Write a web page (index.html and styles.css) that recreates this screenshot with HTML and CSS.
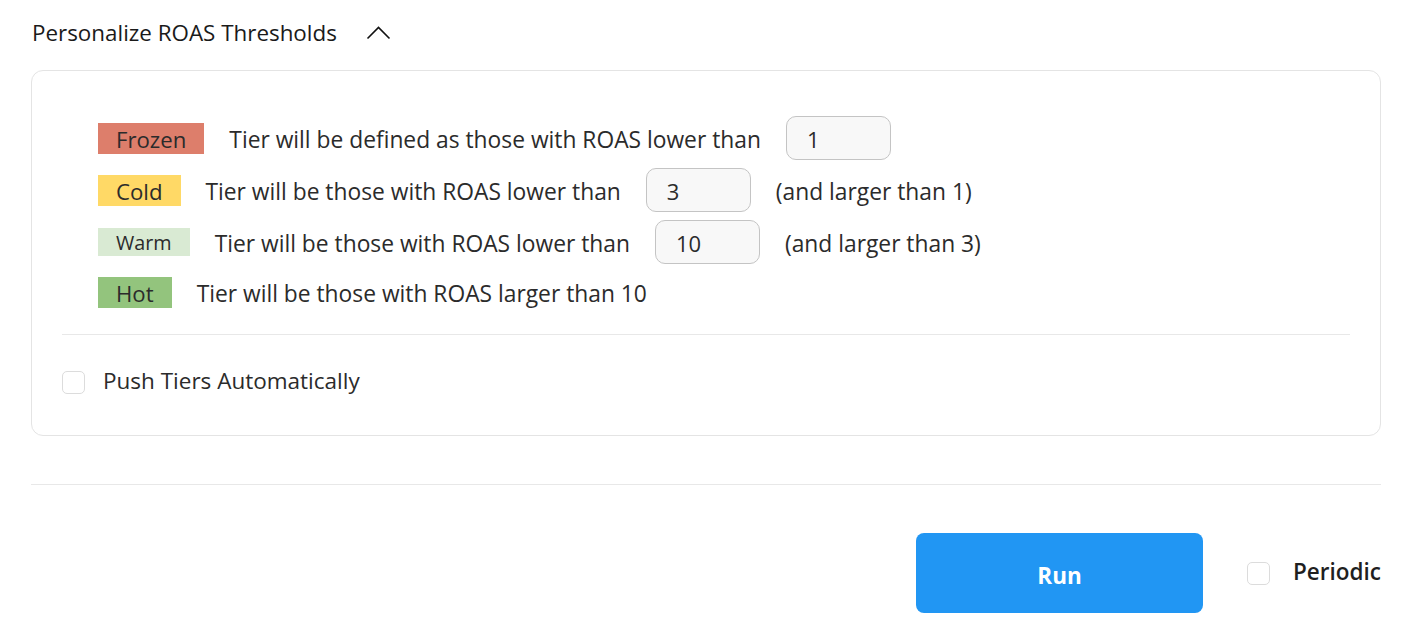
FILE: index.html
```html
<!DOCTYPE html>
<html lang="en">
<head>
<meta charset="utf-8">
<title>Personalize ROAS Thresholds</title>
<link rel="stylesheet" href="styles.css">
</head>
<body>
<div class="page">
  <div class="section-head">
    <span class="section-title">Personalize ROAS Thresholds</span>
    <svg class="chevron" width="25" height="15" viewBox="0 0 25 15"><path d="M1.5 13.5 L12.5 2.5 L23.5 13.5" fill="none" stroke="#111" stroke-width="1.6"/></svg>
  </div>

  <div class="card">
    <div class="tiers">
      <div class="tier-row">
        <span class="badge badge-frozen">Frozen</span>
        <span class="tier-text">Tier will be defined as those with ROAS lower than</span>
        <input class="num-input" type="text" value="1">
      </div>
      <div class="tier-row">
        <span class="badge badge-cold">Cold</span>
        <span class="tier-text">Tier will be those with ROAS lower than</span>
        <input class="num-input" type="text" value="3">
        <span class="tier-text">(and larger than 1)</span>
      </div>
      <div class="tier-row">
        <span class="badge badge-warm">Warm</span>
        <span class="tier-text">Tier will be those with ROAS lower than</span>
        <input class="num-input" type="text" value="10">
        <span class="tier-text">(and larger than 3)</span>
      </div>
      <div class="tier-row tier-row-last">
        <span class="badge badge-hot">Hot</span>
        <span class="tier-text">Tier will be those with ROAS larger than 10</span>
      </div>
    </div>
    <div class="divider"></div>
    <label class="check-row">
      <span class="checkbox"></span>
      <span class="check-label">Push Tiers Automatically</span>
    </label>
  </div>

  <div class="outer-divider"></div>

  <div class="actions">
    <button class="run-btn">Run</button>
    <label class="periodic">
      <span class="checkbox"></span>
      <span class="periodic-label">Periodic</span>
    </label>
  </div>
</div>
</body>
</html>
```

FILE: styles.css
```css
* { box-sizing: border-box; }
html, body { margin: 0; padding: 0; background: #fff; }
body {
  font-family: "Open Sans", "Noto Sans", "Liberation Sans", sans-serif;
  color: #2b2b2b;
}
.page {
  width: 1425px;
  padding: 0 44px 0 31px;
}
.section-head {
  height: 70px;
  display: flex;
  align-items: flex-start;
  padding-top: 17px;
  padding-left: 1px;
}
.section-title {
  font-size: 22.4px;
  line-height: 32px;
  color: #1a1a1a;
}
.chevron {
  margin-left: 29px;
  margin-top: 8px;
}
.card {
  border: 1px solid #e4e4e4;
  border-radius: 12px;
  padding: 45px 30px 0 30px;
  height: 366px;
}
.tiers {
  display: flex;
  flex-direction: column;
  gap: 8px;
  padding-left: 36px;
}
.tier-row {
  display: flex;
  align-items: center;
  gap: 25px;
  min-height: 44px;
}
.tier-row-last { min-height: 40px; }
.badge {
  font-size: 22.2px;
  line-height: 33px;
  height: 31px;
  padding: 0 18px;
  color: #2b2b2b;
  overflow: hidden;
}
.badge-frozen { background: #dd7e6b; }
.badge-cold { background: #ffd966; }
.badge-warm { background: #d9ead3; font-size: 19.8px; height: 28px; line-height: 30px; }
.badge-hot { background: #93c47d; }
.tier-text {
  font-size: 22.8px;
  line-height: 32px;
  padding-top: 4px;
}
.num-input {
  width: 105px;
  height: 44px;
  border: 1px solid #c4c4c4;
  border-radius: 10px;
  background: #f8f8f8;
  padding: 2px 0 0 20px;
  font-family: inherit;
  font-size: 22px;
  color: #2b2b2b;
  outline: none;
}
.divider {
  height: 1px;
  background: #e8e8e8;
  margin: 22px 0 0 0;
}
.check-row {
  display: flex;
  align-items: center;
  gap: 18px;
  margin-top: 30px;
}
.checkbox {
  width: 23px;
  height: 23px;
  border: 1px solid #dcdcdc;
  border-radius: 5px;
  background: #fff;
  flex: none;
}
.check-label {
  font-size: 22.5px;
  line-height: 32px;
  padding-bottom: 2px;
}
.outer-divider {
  height: 1px;
  background: #e8e8e8;
  margin-top: 48px;
}
.actions {
  display: flex;
  justify-content: flex-end;
  align-items: center;
  margin-top: 48px;
}
.run-btn {
  width: 287px;
  height: 80px;
  border: none;
  border-radius: 8px;
  background: #2196f3;
  color: #fff;
  font-family: inherit;
  font-size: 22.5px;
  font-weight: 700;
  padding: 4px 0 0 0;
}
.periodic {
  display: flex;
  align-items: center;
  gap: 23px;
  margin-left: 44px;
}
.periodic-label {
  font-size: 22.5px;
  font-weight: 600;
  color: #1f1f1f;
  padding-bottom: 3px;
}
```
